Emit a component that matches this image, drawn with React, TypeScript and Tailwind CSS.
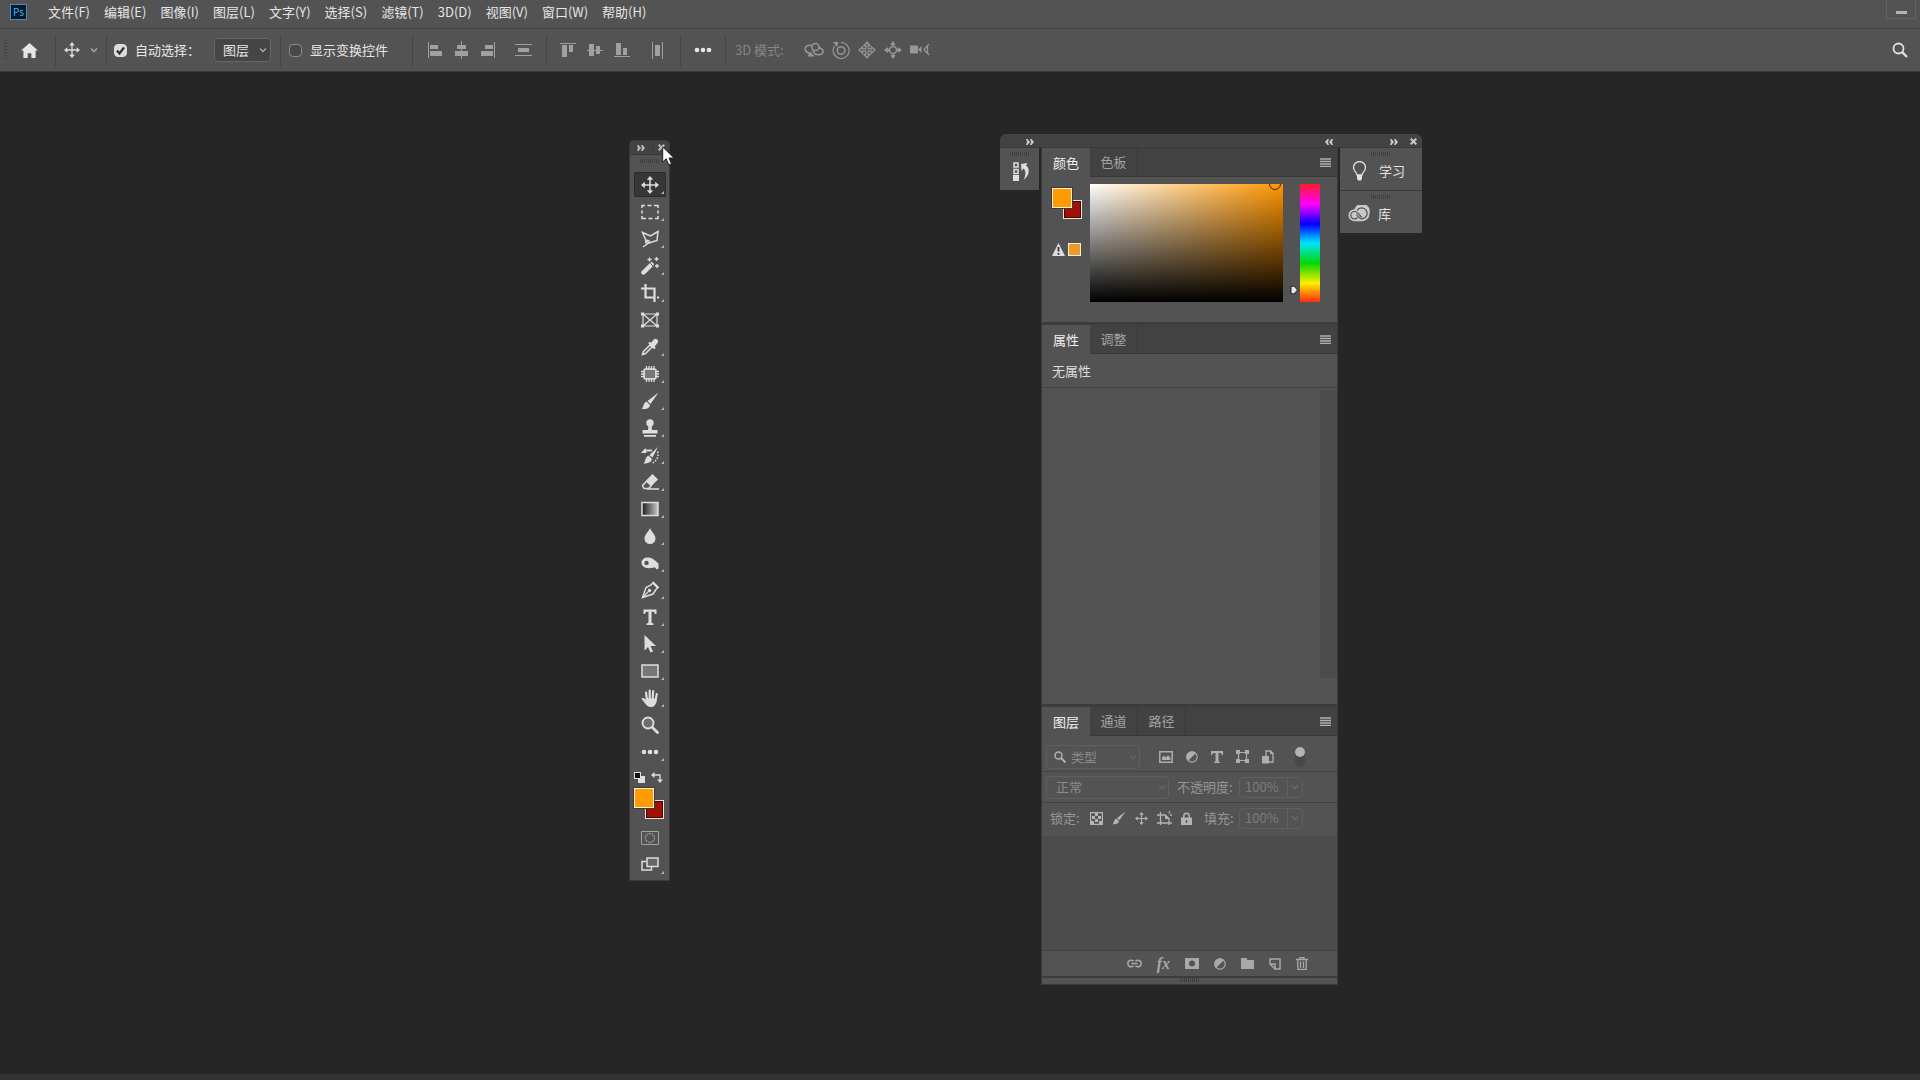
import React from "react";

type P = { children?: React.ReactNode; className?: string };

function Icon({ w = 18, h = 18, vb, children, className = "" }: P & { w?: number; h?: number; vb?: string }) {
  return (
    <svg width={w} height={h} viewBox={vb ?? `0 0 ${w} ${h}`} fill="none" stroke="currentColor" strokeWidth="1.5" className={`shrink-0 ${className}`} aria-hidden="true">
      {children}
    </svg>
  );
}

const F = { fill: "currentColor", stroke: "none" };

const Chevron = ({ className = "" }: P) => (
  <Icon w={8} h={6} className={className}>
    <path d="M1 1.500 4 4.500 7 1.500" strokeWidth="1.300" />
  </Icon>
);

const MovePaths = () => (
  <>
    <path d="M9 3v12M3 9h12" />
    <path {...F} d="M9 0l3.200 3.800H5.800zM9 18l3.200-3.800H5.800zM0 9l3.800-3.200v6.400zM18 9l-3.800-3.200v6.400z" />
  </>
);

const DoubleRight = () => (
  <Icon w={8} h={6}>
    <path {...F} d="M0 0h1.500L4 3 1.500 6H0l1-3zM4 0h1.500L8 3 5.500 6H4l1-3z" />
  </Icon>
);
const DoubleLeft = () => (
  <Icon w={8} h={6}>
    <path {...F} d="M8 0H6.500L4 3l2.500 3H8L7 3zM4 0H2.500L0 3l2.500 3H4L3 3z" />
  </Icon>
);
const CloseX = () => (
  <Icon w={7} h={7}>
    <path d="M.7.700l5.600 5.600M6.300.700.700 6.300" strokeWidth="2" />
  </Icon>
);

const Grip = ({ className = "" }: P) => (
  <div className={`h-1 w-5 shrink-0 bg-[repeating-linear-gradient(to_right,#404040_0_1px,transparent_1px_2px)] ${className}`} />
);

const menus = ["文件(F)", "编辑(E)", "图像(I)", "图层(L)", "文字(Y)", "选择(S)", "滤镜(T)", "3D(D)", "视图(V)", "窗口(W)", "帮助(H)"];

function MenuBar() {
  return (
    <header className="flex h-[29px] items-start border-b border-[#424242] bg-[#535353]">
      <div className="flex h-6 w-12 items-center pl-[10px]">
        <div className="flex h-4 w-[17px] items-center justify-center border border-[#4a8fb8] bg-[#04192c] text-[10px] leading-none text-[#4fb0e8]">Ps</div>
      </div>
      <nav className="flex h-6 items-center gap-[14px]">
        {menus.map((m) => (
          <button key={m} className="whitespace-nowrap text-[13px] leading-5 text-[#e6e6e6]">{m}</button>
        ))}
      </nav>
      <button aria-label="最小化" className="ml-auto mr-1 flex h-[19px] w-[30px] items-center justify-center border border-t-0 border-[#626262] pt-[6px]">
        <span className="h-[3px] w-[11px] bg-[#b4b4b4]" />
      </button>
    </header>
  );
}

const Sep = () => <div className="h-[31px] w-px shrink-0 bg-[#444]" />;

const alignA: [string, React.ReactNode][] = [
  ["左对齐", <Icon w={15} h={18}><path d="M.5 1v16" strokeWidth="1" /><path {...F} d="M2 4h8v4H2zM2 10h12v5H2z" /></Icon>],
  ["水平居中对齐", <Icon w={13} h={18}><path d="M6.500 0v18" strokeWidth="1" /><path {...F} d="M2 4h9v4H2zM0 10h13v5H0z" /></Icon>],
  ["右对齐", <Icon w={15} h={18}><path d="M14.500 1v16" strokeWidth="1" /><path {...F} d="M5 4h8v4H5zM1 10h12v5H1z" /></Icon>],
];
const alignB: [string, React.ReactNode][] = [
  ["顶对齐", <Icon w={16} h={16}><path d="M0 1.500h16" strokeWidth="1" /><path {...F} d="M2 3h5v12H2zM9 3h4v7H9z" /></Icon>],
  ["垂直居中对齐", <Icon w={16} h={16}><path d="M0 8.500h16" strokeWidth="1" /><path {...F} d="M2 2h5v12H2zM9 4h4v8H9z" /></Icon>],
  ["底对齐", <Icon w={16} h={16}><path d="M0 14.500h16" strokeWidth="1" /><path {...F} d="M2 1h5v12H2zM9 6h4v7H9z" /></Icon>],
];
const modes3d: [string, React.ReactNode][] = [
  ["旋转 3D 对象", <Icon w={20} h={18}><circle cx="11.500" cy="6" r="3.600" /><path d="M8 4.500C3.500 3.500.500 6 1.200 8.700c.5 1.800 2.300 3 4.300 3.500M15 6.500c4 1.500 5 3.800 3.500 5.700-1.500 1.800-5 2-7.500.8L8.500 9" /><path {...F} d="M3.500 15.500 6 10.500l5 5z" /></Icon>],
  ["滚动 3D 对象", <Icon w={18} h={18}><circle cx="9" cy="9.500" r="3.800" /><path d="M2.500 5A8 8 0 1 0 9 1.500" strokeWidth="1.200" /><path {...F} d="M1 1h5.500L5 6z" /></Icon>],
  ["拖动 3D 对象", <Icon w={18} h={18}><path strokeWidth="1.300" d="M9 1l3 3.500h-1.800v3.300h3.300V6L17 9l-3.500 3v-1.800h-3.300v3.300H12L9 17l-3-3.500h1.800v-3.300H4.500V12L1 9l3.500-3v1.800h3.300V4.500H6z" /></Icon>],
  ["滑动 3D 对象", <Icon w={18} h={18}><circle cx="9" cy="9" r="3.500" /><path {...F} d="M9 0l2.500 3.500L9 5 6.500 3.500zM9 18l2.500-3.500L9 13l-2.500 1.500zM0 9l3.500-2.800L5.500 9l-2 2.800zM18 9l-3.500-2.800L12.500 9l2 2.800z" /></Icon>],
  ["缩放 3D 对象", <Icon w={20} h={14}><path {...F} d="M0 2.500h8v8H0zM8 6.500l3.500-3.500v7z" /><path d="M19 1l-5 5.500 5 5.500M17.500 3v7" strokeWidth="1.200" /></Icon>],
];

function OptionsBar() {
  return (
    <section aria-label="选项" className="flex h-[43px] items-center border-b border-[#3a3a3a] bg-[#535353] pl-1 text-[13px] text-[#e6e6e6]">
      <div className="h-5 w-[3px] bg-[repeating-linear-gradient(to_bottom,#404040_0_1px,transparent_1px_3px)]" />
      <button aria-label="主页" className="flex w-12 justify-center pr-1">
        <Icon w={17} h={15} vb="0 0 18 16"><path {...F} d="M9 0 0 8h2.500v8H7v-5h4v5h4.500V8H18z" /></Icon>
      </button>
      <Sep />
      <button aria-label="移动工具" className="flex w-[50px] items-center gap-[10px] pl-2">
        <Icon w={16} h={16} vb="0 0 18 18" className="text-[#dcdcdc]"><MovePaths /></Icon>
        <Chevron className="text-[#aaa]" />
      </button>
      <Sep />
      <label className="flex w-[107px] items-center gap-2 whitespace-nowrap pl-[7px]">
        <span className="relative flex">
          <input type="checkbox" defaultChecked className="peer size-[13px] appearance-none rounded-sm border border-[#888] checked:border-[#dcdcdc] checked:bg-[#dcdcdc]" />
          <Icon w={13} h={13} className="pointer-events-none absolute inset-0 text-[#303030] opacity-0 peer-checked:opacity-100"><path d="M3 6.500 5.500 9.500 10 3.500" strokeWidth="2.200" /></Icon>
        </span>
        自动选择：
      </label>
      <div className="relative flex w-[57px] items-center">
        <select aria-label="自动选择" className="h-6 w-full appearance-none rounded-sm border border-[#666] bg-[#454545] pl-2">
          <option>图层</option>
          <option>组</option>
        </select>
        <Chevron className="pointer-events-none absolute right-1 text-[#aaa]" />
      </div>
      <div className="w-[9px]" />
      <Sep />
      <label className="flex w-[131px] items-center gap-2 whitespace-nowrap pl-2">
        <input type="checkbox" className="size-[13px] appearance-none rounded-sm border border-[#8a8a8a] bg-[#484848] checked:bg-[#dcdcdc]" />
        显示变换控件
      </label>
      <Sep />
      <div className="flex w-[133px] items-center gap-3 pl-[15px] text-[#a0a0a0]">
        {alignA.map(([n, i]) => <button key={n} aria-label={n}>{i}</button>)}
        <button aria-label="垂直分布" className="ml-2">
          <Icon w={17} h={14}><path d="M0 1.500h17M0 12.500h17" strokeWidth="1" /><path {...F} d="M3 5h11v4H3z" /></Icon>
        </button>
      </div>
      <Sep />
      <div className="flex w-[133px] items-center gap-[11px] pl-[13px] text-[#a0a0a0]">
        {alignB.map(([n, i]) => <button key={n} aria-label={n}>{i}</button>)}
        <button aria-label="水平分布" className="ml-[11px]">
          <Icon w={11} h={17}><path d="M.5 0v17M10.500 0v17" strokeWidth="1" /><path {...F} d="M3 3h5v11H3z" /></Icon>
        </button>
      </div>
      <Sep />
      <button aria-label="更多" className="flex w-11 justify-center">
        <Icon w={18} h={6}><circle {...F} cx="3" cy="3" r="2.300" /><circle {...F} cx="9" cy="3" r="2.300" /><circle {...F} cx="15" cy="3" r="2.300" /></Icon>
      </button>
      <Sep />
      <span className="w-[78px] whitespace-nowrap pl-[9px] text-[#858585]">3D 模式:</span>
      <div className="flex items-center gap-2 text-[#969696]">
        {modes3d.map(([n, i]) => <button key={n} aria-label={n} disabled>{i}</button>)}
      </div>
      <button aria-label="搜索" className="ml-auto mr-3 text-[#e0e0e0]">
        <Icon w={16} h={16}><circle cx="6.500" cy="6.500" r="5" strokeWidth="1.800" /><path d="M10 10l5 5" strokeWidth="2.400" /></Icon>
      </button>
    </section>
  );
}

const tools: [string, React.ReactNode][] = [
  ["移动工具", <MovePaths />],
  ["矩形选框工具", <path d="M1 5V2.500h3M6.500 2.500h4M13 2.500h4V5M17 7.500v3M17 13v2.500h-3M11.500 15.500h-4M5 15.500H1V13M1 10.500v-3" />],
  ["多边形套索工具", <><path d="M5.500 11.500 1.500 2.500l8 3.500L17 1.500l-1 9-8 2.500" /><path d="M5 10.500c2-.8 4 .2 3.500 1.800S4.500 14 4.500 12s1.500-1.500 3 1L2 17" strokeWidth="1.300" /></>],
  ["魔棒工具", <><path d="M2.500 15.500 10 8" strokeWidth="4.400" strokeLinecap="round" /><path d="M9.500 8.500 12 6" strokeWidth="3.400" /><path d="M9.300 6.300l2.800 2.800" stroke="#535353" strokeWidth="1" /><path strokeWidth="1.300" d="M8.500.500v4M6.500 2.500h4M15.500 0v4M13.500 2h4M16 7v4M14 9h4" /></>],
  ["裁剪工具", <path strokeWidth="2.200" d="M4.500 0v13.500H14M0 4.500h13.500V18M16 13.500h2" />],
  ["图框工具", <><path d="M2 3h14v12H2zM2 3l14 12M16 3 2 15" strokeWidth="1.200" /><path {...F} d="M0 1.500h3v3H0zM15 1.500h3v3h-3zM0 13.500h3v3H0zM15 13.500h3v3h-3z" /></>],
  ["吸管工具", <><path d="M9.500 6.500 2.500 13.500l-1 3 3-1 7-7" /><path d="M8 4.500l6 6" strokeWidth="2.200" /><path d="M11.500 7l3-3.500" strokeWidth="5" strokeLinecap="round" /></>],
  ["修补工具", <><rect x="3" y="4" width="12" height="10" rx="1.500" fill="#777" /><path strokeWidth="1.300" d="M5.500 1v4M8 1v4M10.500 1v4M13 1v4M5.500 13v4M8 13v4M10.500 13v4M13 13v4M0 6.500h4M0 9h4M0 11.500h4M14 6.500h4M14 9h4M14 11.500h4" /></>],
  ["画笔工具", <><path {...F} d="M17.500.500 9.500 12 6.500 9z" /><path {...F} d="M5.500 9.500 9 13c-.5 3.500-4 4.500-8.500 4 2-1 1.500-6 5-7.500z" /></>],
  ["仿制图章工具", <><circle {...F} cx="9" cy="4" r="3.700" /><path {...F} d="M7.500 6h3l.5 5h5.500v3.500h-15V11H7zM3 16h12v1.800H3z" /></>],
  ["历史记录画笔工具", <><path {...F} d="M17 1 11.500 11.500 8.500 9zM7.500 9.500l3.500 3.500c-.5 3-3.500 4.500-8.500 4.500 2-1.500 1.500-6.500 5-8zM0 7l4.500-5 1 5z" /><path d="M3 4.500h8" strokeWidth="1.800" /><path strokeDasharray="1.500 1.500" d="M16.500 5.500c1.500 5-.5 9-5 11.500" strokeWidth="1.500" /></>],
  ["橡皮擦工具", <><path {...F} d="M11.500 1 17 6.500l-7 7L4.500 8z" /><path d="M5.500 8.500 1.500 12.500l1.500 3h4.500l3-3M6 16h12" /></>],
  ["渐变工具", <><defs><linearGradient id="toolGradient"><stop offset="0" stopColor="#1c1c1c" /><stop offset="1" stopColor="#c8c8c8" /></linearGradient></defs><rect x="1" y="2.500" width="16" height="13" fill="url(#toolGradient)" /></>],
  ["模糊工具", <path {...F} d="M9 1c1.500 4 5.500 6.500 5.500 10.500a5.500 5.500 0 0 1-11 0C3.500 7.500 7.500 5 9 1z" />],
  ["减淡工具", <path {...F} fillRule="evenodd" d="M6.500 3.500c4 0 5 1 7.500 3l3.500 3v5l-2 1-1.500-2.200c-9 2.700-13.500-.6-13.500-4.500 0-3.300 3-5.300 6-5.300zM5.500 6.700a2.200 2.200 0 1 0 0 4.400 2.200 2.200 0 0 0 0-4.400z" />],
  ["钢笔工具", <><path d="M12 2l4.500 4.500-1.500 2-3 4.500L1.500 16.500 5 6.500 10 4z" /><path d="M2 16l5.500-5.500" strokeWidth="1.200" /><circle {...F} cx="8.500" cy="9.500" r="1.700" /><path d="M11.500 1l6 6" strokeWidth="2" /></>],
  ["文字工具", <path {...F} d="M2.500 1.500h13V6H14c-.3-1.800-.8-2.300-2.500-2.300h-1V14c0 1 .5 1.300 2 1.500V17h-7v-1.500c1.500-.2 2-.5 2-1.500V3.700h-1C4.800 3.700 4.300 4.200 4 6H2.500z" />],
  ["路径选择工具", <path {...F} d="M3.500 0v15.500L7 12l2.500 5.500L12 16.500 9.500 11h5.500z" />],
  ["矩形工具", <rect x="1" y="3" width="16" height="12" fill="#777" />],
  ["抓手工具", <><path {...F} d="M5 9.500h10.500v3.500c-1 3-2.500 5-5.500 5-3.500 0-5-2-9.500-8.500 1-1 2.500-.5 4.500 1.500z" /><path d="M6 11 5 3.500M8.700 11V1.500M11.500 11l.7-9M14.300 12.500 15.800 5" strokeWidth="2.200" strokeLinecap="round" /></>],
  ["缩放工具", <><circle cx="7" cy="7" r="5.500" fill="#6e6e6e" strokeWidth="1.800" /><path d="M11.500 11.500l5 5" strokeWidth="2.800" strokeLinecap="round" /></>],
  ["编辑工具栏", <><circle {...F} cx="3" cy="9" r="2.300" /><circle {...F} cx="9" cy="9" r="2.300" /><circle {...F} cx="15" cy="9" r="2.300" /></>],
];
const noCorner = ["图框工具", "缩放工具"];

const Corner = () => (
  <Icon w={3} h={3} className="absolute bottom-1 right-[2px] text-[#b5b5b5]"><path {...F} d="M3 0v3H0z" /></Icon>
);

function Toolbar() {
  return (
    <aside aria-label="工具" className="absolute left-[630px] top-[69px] w-[39px] rounded-t bg-[#535353] text-[#dedede] shadow-[0_0_0_1px_#3a3a3a]">
      <div className="flex h-[14px] items-center rounded-t border-b border-[#383838] bg-[#434343] text-[#bdbdbd]">
        <button aria-label="展开" className="flex w-[22px] justify-center"><DoubleRight /></button>
        <button aria-label="关闭" className="flex flex-1 justify-center border-l border-[#383838]"><CloseX /></button>
      </div>
      <div className="flex h-4 justify-center pt-1"><Grip /></div>
      <div className="flex flex-col items-center">
        {tools.map(([name, icon], i) => (
          <button key={name} aria-label={name} className="relative flex h-[27px] w-8 items-center justify-center">
            <span className={i === 0 ? "flex h-[25px] w-full items-center justify-center rounded-[1px] border border-[#2c2c2c] bg-[#373737]" : "flex"}>
              <Icon w={18} h={18}>{icon}</Icon>
            </span>
            {!noCorner.includes(name) && <Corner />}
          </button>
        ))}
      </div>
      <div className="flex h-[23px] items-center gap-[6px] pl-1 pt-[2px]">
        <button aria-label="默认前景色和背景色">
          <Icon w={11} h={11}><path {...F} d="M4 4h7v7H4z" /><rect x=".5" y=".5" width="6" height="6" fill="#111" strokeWidth="1" /></Icon>
        </button>
        <button aria-label="切换前景色和背景色">
          <Icon w={12} h={11}><path d="M3 3h6v6" strokeWidth="1.300" /><path {...F} d="M0 3l3.500-3v6zM9 11 6 7.500h6z" /></Icon>
        </button>
      </div>
      <Swatches className="ml-1" />
      <div className="mt-[10px] flex flex-col items-center pb-[6px]">
        <button aria-label="以快速蒙版模式编辑" className="flex h-[18px] items-center text-[#a2a2a2]">
          <Icon w={18} h={14}><path d="M.5.500h17v13H.500z" strokeWidth="1" /><circle cx="9" cy="7" r="4.500" strokeDasharray="1.500 1" strokeWidth="1.300" /></Icon>
        </button>
        <button aria-label="更改屏幕模式" className="relative mt-[7px] flex h-5 w-8 items-center justify-center">
          <Icon w={18} h={14}><path d="M5 4.500H1v8.500h9.500V10" /><path d="M6 1h11v8.500H6z" fill="#666" /></Icon>
          <Icon w={3} h={3} className="absolute bottom-0 right-[2px] text-[#b5b5b5]"><path {...F} d="M3 0v3H0z" /></Icon>
        </button>
      </div>
    </aside>
  );
}

function Swatches({ className = "" }: P) {
  return (
    <div className={`relative h-[31px] w-[30px] ${className}`}>
      <button aria-label="背景色" className="absolute bottom-0 right-0 size-[19px] border border-[#f3e3df] bg-[#a30f02] shadow-[inset_0_0_0_1px_#3a0a05]" />
      <button aria-label="前景色" className="absolute left-0 top-0 size-5 border border-[#fff1d8] bg-[#ff9b00] shadow-[0_0_0_1px_#3a3a3a]" />
    </div>
  );
}

const MenuLines = () => (
  <button aria-label="面板菜单" className="ml-auto mr-[6px] flex h-full items-center text-[#b0b0b0]">
    <Icon w={11} h={9}><path d="M0 1h11M0 3.500h11M0 6h11M0 8.500h11" strokeWidth="1.300" /></Icon>
  </button>
);

function Tabs({ names }: { names: string[] }) {
  return (
    <div role="tablist" className="flex h-[29px] items-stretch bg-[#424242] text-[13px]">
      {names.map((n, i) => (
        <button
          key={n}
          role="tab"
          aria-selected={i === 0}
          className={i === 0 ? "w-12 bg-[#535353] text-[#f0f0f0]" : "w-12 border-b border-r border-[#383838] text-[#a2a2a2]"}
        >
          {n}
        </button>
      ))}
      <div className="flex flex-1 border-b border-[#383838]"><MenuLines /></div>
    </div>
  );
}

function ColorPanel() {
  return (
    <section aria-label="颜色">
      <Tabs names={["颜色", "色板"]} />
      <div className="flex h-[145px] pt-[7px]">
        <div className="w-12 pl-[10px] pt-1">
          <Swatches />
          <div className="mt-[24px] flex items-center gap-[3px]">
            <Icon w={13} h={13} className="text-[#dedede]"><path {...F} d="M6.500 0 13 13H0z" /><path d="M6.500 4v4.500M6.500 10v1.800" stroke="#333" strokeWidth="1.800" /></Icon>
            <button aria-label="可打印颜色" className="size-[13px] shrink-0 border border-[#fff1d8] bg-[#f0982a]" />
          </div>
        </div>
        <div className="relative h-[118px] flex-1 overflow-hidden bg-[linear-gradient(to_top,#000,transparent),linear-gradient(to_right,#fff,#ff9500)]">
          <span className="absolute -top-[6px] right-[2px] size-3 rounded-full border border-[#3a2400]" />
        </div>
        <div className="relative ml-[17px] mr-[17px] h-[118px] w-5 bg-[linear-gradient(to_bottom,#ff1a2a,#ff00ff_17%,#0000ff_34%,#00e5ff_50%,#00d800_67%,#ffee00_84%,#ff2a10)]">
          <input type="range" aria-label="色相" defaultValue={10} className="absolute inset-0 h-full w-full opacity-0" />
          <Icon w={8} h={10} className="absolute -left-[10px] bottom-[7px]"><path d="M1 1.500 4 1l3.500 4L4 9 1 8.500z" fill="#e8e8e8" stroke="#222" strokeWidth="1" /></Icon>
        </div>
      </div>
    </section>
  );
}

function PropertiesPanel() {
  return (
    <section aria-label="属性" className="border-t-[3px] border-[#3c3c3c]">
      <Tabs names={["属性", "调整"]} />
      <div className="h-[34px] border-b border-[#434343] pl-[10px] text-[13px] leading-[33px] text-[#dedede]">无属性</div>
      <div className="flex h-[316px] justify-end"><div className="mt-[2px] h-[288px] w-[17px] bg-[#4b4b4b]" /></div>
    </section>
  );
}

function Percent({ id }: { id: string }) {
  return (
    <div className="flex h-[21px] w-[64px] rounded-sm border border-[#606060]">
      <input id={id} defaultValue="100%" className="w-[47px] min-w-0 bg-transparent pl-[5px] text-[13px] text-[#7c7c7c]" />
      <button aria-label="调整数值" className="flex flex-1 items-center justify-center border-l border-[#606060] text-[#6c6c6c]"><Chevron /></button>
    </div>
  );
}

const Adjustment = () => (
  <Icon w={12} h={12}>
    <circle cx="6" cy="6" r="5.200" strokeWidth="1.200" />
    <path {...F} d="M10 2 2 10a5.600 5.600 0 0 1 0-8 5.600 5.600 0 0 1 8 0z" />
  </Icon>
);

const filters: [string, React.ReactNode][] = [
  ["像素图层滤镜", <Icon w={14} h={12}><path d="M.8.800h12.400v10.400H.800z" /><path {...F} d="M3 9V6.500L5 4.500l2 2 2-2.500 2.500 3V9z" /></Icon>],
  ["调整图层滤镜", <Adjustment />],
  ["文字图层滤镜", <Icon w={12} h={12}><path {...F} d="M0 0h12v4h-1.200c-.2-1.500-.6-2-2-2H7.500v8c0 .7.500.8 1.500 1v1H3v-1c1-.2 1.500-.3 1.500-1V2H3.200c-1.400 0-1.800.5-2 2H0z" /></Icon>],
  ["形状图层滤镜", <Icon w={13} h={13}><path d="M2.500 2.500h8v8h-8z" strokeWidth="1.200" /><path {...F} d="M0 0h4v4H0zM9 0h4v4H9zM0 9h4v4H0zM9 9h4v4H9z" /></Icon>],
  ["智能对象滤镜", <Icon w={12} h={14}><path d="M4 6V1h4.500L11 3.500V12H7" strokeWidth="1.300" /><path {...F} d="M8 0l4 4H8zM0 6h7v7.500H0z" /></Icon>],
];
const locks: [string, React.ReactNode][] = [
  ["锁定透明像素", <Icon w={13} h={13}><path d="M.6.600h11.800v11.800H.600z" strokeWidth="1.200" /><path {...F} d="M5 1h3v3H5zM2 4h3v3H2zM8 4h3v3H8zM5 7h3v3H5zM1 9h3v3H1zM9 9h3v3H9z" /></Icon>],
  ["锁定图像像素", <Icon w={14} h={14} vb="0 0 18 18"><path {...F} d="M17.500.500 9.500 12 6.500 9zM5.500 9.500 9 13c-.5 3.500-4 4.500-8.500 4 2-1 1.500-6 5-7.500z" /></Icon>],
  ["锁定位置", <Icon w={13} h={13} vb="0 0 18 18"><MovePaths /></Icon>],
  ["防止在画板内外自动嵌套", <Icon w={15} h={14}><path d="M3.500 1v13M0 4h8l4 4v6M0 12h15M12.500 0v2.500M13 4h2" strokeWidth="1.300" /><path {...F} d="M8 3l5 5H8z" /></Icon>],
  ["锁定全部", <Icon w={11} h={13}><path d="M2.800 6V4a2.700 2.700 0 0 1 5.400 0v2" /><path {...F} fillRule="evenodd" d="M0 5.500h11V13H0zM4.800 8v3h1.400V8z" /></Icon>],
];
const actions: [string, React.ReactNode][] = [
  ["链接图层", <Icon w={15} h={9}><path d="M6.500 6.800A3.300 3.300 0 1 1 6.500 2.200M8.500 2.200a3.300 3.300 0 1 1 0 4.600M4.500 4.500h6" /></Icon>],
  ["添加图层样式", <span className="font-['Liberation_Serif',serif] text-[16px] font-bold italic leading-4">fx</span>],
  ["添加图层蒙版", <Icon w={14} h={11}><path {...F} fillRule="evenodd" d="M0 0h14v11H0zM7 2.500a3 3 0 1 0 0 6 3 3 0 0 0 0-6z" /></Icon>],
  ["创建新的填充或调整图层", <Adjustment />],
  ["创建新组", <Icon w={13} h={11}><path {...F} d="M0 0h5.500l1 2H13v9H0z" /></Icon>],
  ["创建新图层", <Icon w={12} h={12}><path d="M1 5V1h10v10H6.500" /><path d="M1 6h5v5z" /></Icon>],
  ["删除图层", <Icon w={12} h={13}><path d="M0 2.500h12M4 2.500v-2h4v2M1.800 3v9.300h8.400V3M4.500 4.500v6.500M7.500 4.500v6.500" strokeWidth="1.300" /></Icon>],
];

function LayersPanel() {
  return (
    <section aria-label="图层" className="border-t-[3px] border-[#3c3c3c] text-[13px] text-[#969696]">
      <Tabs names={["图层", "通道", "路径"]} />
      <div className="flex h-9 items-center border-b border-[#424242] pl-1 pt-[6px]">
        <div className="relative flex w-[94px] items-center">
          <Icon w={12} h={12} className="pointer-events-none absolute left-2 text-[#b0b0b0]"><circle cx="4.500" cy="4.500" r="3.500" /><path d="M7 7l4.500 4.500" strokeWidth="2" /></Icon>
          <select aria-label="滤镜类型" className="h-6 w-full appearance-none rounded-sm border border-[#606060] pl-6 text-[#8a8a8a]">
            <option>类型</option>
            <option>名称</option>
          </select>
          <Chevron className="pointer-events-none absolute right-[3px] text-[#666]" />
        </div>
        <div className="ml-[19px] flex flex-1 items-center gap-[13px] text-[#aeaeae]">
          {filters.map(([n, i]) => <button key={n} aria-label={n}>{i}</button>)}
          <button aria-label="打开或关闭图层滤镜" className="ml-2 flex h-5 w-[10px] rounded-full bg-[#484848]">
            <span className="size-[10px] rounded-full bg-[#b4b4b4]" />
          </button>
        </div>
      </div>
      <div className="flex h-[31px] items-center border-b border-[#424242] pl-1">
        <div className="relative flex w-[123px] items-center">
          <select aria-label="混合模式" className="h-[23px] w-full appearance-none rounded-sm border border-[#606060] pl-[9px] text-[#8a8a8a]">
            <option>正常</option>
            <option>溶解</option>
          </select>
          <Chevron className="pointer-events-none absolute right-[3px] text-[#666]" />
        </div>
        <label htmlFor="opacity" className="w-[70px] whitespace-nowrap pl-2">不透明度:</label>
        <Percent id="opacity" />
      </div>
      <div className="flex h-[33px] items-center pb-[3px] pl-2">
        <span className="w-10 whitespace-nowrap">锁定:</span>
        <div className="flex w-[114px] items-center gap-[9px] text-[#b4b4b4]">
          {locks.map(([n, i]) => <button key={n} aria-label={n}>{i}</button>)}
        </div>
        <label htmlFor="fill" className="w-[35px] whitespace-nowrap">填充:</label>
        <Percent id="fill" />
      </div>
      <div className="h-[114px] bg-[#4c4c4c]" />
      <div className="flex h-[26px] items-center justify-end gap-[15px] border-t border-[#434343] pr-[29px] text-[#a8a8a8]">
        {actions.map(([n, i]) => <button key={n} aria-label={n}>{i}</button>)}
      </div>
      <div className="flex h-[8px] justify-center border-t-2 border-[#3c3c3c]"><Grip /></div>
    </section>
  );
}

function Dock() {
  return (
    <aside aria-label="面板" className="absolute left-[1000px] top-[62px] w-[422px]">
      <div className="flex h-[14px] items-center rounded-t-md border-b border-[#383838] bg-[#434343] pt-[2px] text-[#c8c8c8]">
        <button aria-label="展开历史记录" className="flex w-[34px] justify-end"><DoubleRight /></button>
        <button aria-label="折叠面板" className="flex w-[299px] justify-end"><DoubleLeft /></button>
        <button aria-label="展开学习" className="flex w-[65px] justify-end"><DoubleRight /></button>
        <button aria-label="关闭" className="flex w-[19px] justify-end"><CloseX /></button>
      </div>
      <div className="flex items-start gap-[3px]">
        <div className="flex h-[42px] w-[39px] flex-col items-center bg-[#535353] pt-1 text-[#dedede]">
          <Grip />
          <button aria-label="历史记录" className="mt-[6px] pl-1">
            <Icon w={17} h={19}><path d="M1 1h4v4H1zM1 7.500h4v4H1z" /><path {...F} d="M0 13h6v6H0zM8 2l6.500-1-1.500 2.500c4 3 4 9-2.500 14.500 2.500-5 2.500-8.500.2-11.500L8.500 9z" /></Icon>
          </button>
        </div>
        <div className="flex-1 bg-[#535353] shadow-[0_0_0_1px_#3a3a3a]">
          <ColorPanel />
          <PropertiesPanel />
          <LayersPanel />
        </div>
        <div className="w-[82px] bg-[#535353] text-[13px] text-[#e2e2e2]">
          <div className="flex h-[43px] flex-col items-center border-b border-[#3a3a3a] pt-1">
            <Grip />
            <button className="mt-[5px] flex w-full items-center gap-3 pl-3">
              <Icon w={15} h={20}><path d="M5 14c0-2.500-3.500-3.500-3.500-7.500a6 6 0 0 1 12 0C13.500 10.500 10 11.500 10 14z" strokeWidth="1.300" /><path {...F} d="M5 14h5v3.500l-1 2H6l-1-2z" /></Icon>
              学习
            </button>
          </div>
          <div className="flex h-[42px] flex-col items-center pt-1">
            <Grip />
            <button className="mt-[5px] flex w-full items-center gap-2 pl-2">
              <Icon w={22} h={17} className="text-[#c8c8c8]">
                <path {...F} d="M6.500 4.200A7.800 7.800 0 0 1 21.500 8.500a7.600 7.600 0 0 1-7.500 7.800H6.500a6 6 0 0 1 0-12.100z" />
                <path stroke="#505050" strokeWidth="1.200" d="M9.500 12.500c-.8.900-1.800 1.400-3 1.400a3.700 3.700 0 0 1 0-7.400c1.500 0 2.400.6 3.300 1.600l4 4.300M9 5.500a5.500 5.500 0 1 1 5.500 8.300c-1.500 0-2.700-.6-3.700-1.700L8.500 9.700" />
              </Icon>
              库
            </button>
          </div>
        </div>
      </div>
    </aside>
  );
}

export default function App() {
  return (
    <div className="flex h-screen w-full flex-col overflow-hidden bg-[#262626] font-['Noto_Sans_CJK_SC',sans-serif]">
      <MenuBar />
      <OptionsBar />
      <main className="relative flex-1">
        <Toolbar />
        <Dock />
        <svg width="13" height="20" viewBox="0 0 13 20" className="pointer-events-none absolute left-[662px] top-[74px]" aria-hidden="true">
          <path d="M.7 1v15l3.500-3.200L6.800 19l2.700-1.200L7 12h5z" fill="#fff" stroke="#222" strokeWidth="1" />
        </svg>
      </main>
      <footer className="h-[6px] bg-[#333]" />
    </div>
  );
}
